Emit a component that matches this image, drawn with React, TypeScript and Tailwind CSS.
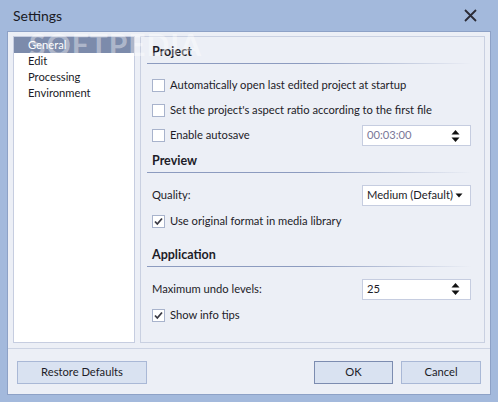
import React from "react";

const font = { fontFamily: 'Lato, "Noto Sans", sans-serif' };

function Check({ checked }: { checked?: boolean }) {
  return (
    <span className="flex h-[13px] w-[13px] shrink-0 items-center justify-center border border-[#a8b3cc] bg-white">
      {checked && (
        <svg width="9" height="9" viewBox="0 0 9 9">
          <path d="M1 4.5 L3.3 7 L8 1.5" fill="none" stroke="#3a3a44" strokeWidth="1.8" />
        </svg>
      )}
    </span>
  );
}

function CheckRow({ label, checked, h = "h-[25px]", children }: { label: string; checked?: boolean; h?: string; children?: React.ReactNode }) {
  return (
    <div className={`flex ${h} items-center pl-[11px] pr-[13px]`}>
      <Check checked={checked} />
      <span className="ml-[5px] flex-1 whitespace-nowrap">{label}</span>
      {children}
    </div>
  );
}

function Header({ title }: { title: string }) {
  return (
    <div className="relative flex h-[24px] items-center pl-[11px] text-[12.5px] font-bold">
      {title}
      <div className="absolute bottom-0 left-[6px] right-[12px] h-px bg-gradient-to-r from-[#8c9bbf] via-[#8c9bbf] to-transparent" />
    </div>
  );
}

function Spin() {
  return (
    <svg width="9" height="14" viewBox="0 0 9 14" className="mr-[10px]">
      <path d="M4.5 1 L8.5 5.5 L0.5 5.5 Z" fill="#111" />
      <path d="M4.5 13 L8.5 8.5 L0.5 8.5 Z" fill="#111" />
    </svg>
  );
}

function Field({ value, muted, children }: { value: string; muted?: boolean; children: React.ReactNode }) {
  return (
    <div className={`flex h-[21px] w-[109px] shrink-0 items-center justify-between border border-[#c6cde0] bg-white pl-[4px] ${muted ? "text-[#7a7898]" : ""}`}>
      <span className="whitespace-nowrap">{value}</span>
      {children}
    </div>
  );
}

export default function App() {
  return (
    <div className="flex h-[402px] w-[498px] flex-col bg-[#a3b9dc] text-[11.2px] text-[#1c1c28]" style={font}>
      <div className="flex h-[31px] items-center justify-between pl-[13px] pr-[21px]">
        <span className="text-[14px] text-[#1a1a24]">Settings</span>
        <svg width="13" height="13" viewBox="0 0 13 13">
          <path d="M1 1 L12 12 M12 1 L1 12" stroke="#2b2b36" strokeWidth="1.8" />
        </svg>
      </div>
      <div className="relative mx-[7px] flex h-[364px] flex-col border border-[#8da1c6] bg-[#eceff6]">
        <div className="mx-[5px] mt-[4px] flex h-[307px] gap-[5px]">
          <div className="w-[122px] border border-[#c6cde0] bg-white">
            <div className="flex h-[16px] items-center bg-[#7c8bab] pl-[14px] text-white">General</div>
            <div className="flex h-[16px] items-center pl-[14px]">Edit</div>
            <div className="flex h-[16px] items-center pl-[14px]">Processing</div>
            <div className="flex h-[16px] items-center pl-[14px]">Environment</div>
          </div>
          <div className="flex-1 border border-[#c9d0e1] pt-[3px]">
            <Header title="Project" />
            <div className="h-[9px]" />
            <CheckRow label="Automatically open last edited project at startup" />
            <CheckRow label="Set the project's aspect ratio according to the first file" />
            <CheckRow label="Enable autosave">
              <Field value="00:03:00" muted>
                <Spin />
              </Field>
            </CheckRow>
            <div className="h-px" />
            <Header title="Preview" />
            <div className="h-[9px]" />
            <div className="flex h-[26px] items-center justify-between pl-[11px] pr-[13px]">
              <span>Quality:</span>
              <Field value="Medium (Default)">
                <svg width="8" height="5" viewBox="0 0 8 5" className="mr-[7px]">
                  <path d="M0.5 0.5 L7.5 0.5 L4 4.5 Z" fill="#111" />
                </svg>
              </Field>
            </div>
            <CheckRow label="Use original format in media library" checked h="h-[26px]" />
            <div className="h-[9px]" />
            <Header title="Application" />
            <div className="h-[9px]" />
            <div className="flex h-[26px] items-center justify-between pl-[11px] pr-[13px]">
              <span>Maximum undo levels:</span>
              <Field value="25">
                <Spin />
              </Field>
            </div>
            <CheckRow label="Show info tips" checked h="h-[26px]" />
          </div>
        </div>
        <div className="mt-[5px] h-px bg-[#ccd3e3]" />
        <div className="mt-[12px] flex px-[9px]">
          <button className="h-[23px] w-[130px] border border-[#a9b8d6] bg-[#d9e2f1]">Restore Defaults</button>
          <div className="flex-1" />
          <button className="h-[23px] w-[79px] border border-[#7c8cb0] bg-[#d9e2f1]">OK</button>
          <button className="ml-[8px] h-[23px] w-[80px] border border-[#a9b8d6] bg-[#d9e2f1]">Cancel</button>
        </div>
        <div className="pointer-events-none absolute left-[21px] top-[-10px] select-none text-[30px] font-bold tracking-[1px] text-white/40">
          SOFTPEDIA
        </div>
      </div>
    </div>
  );
}
